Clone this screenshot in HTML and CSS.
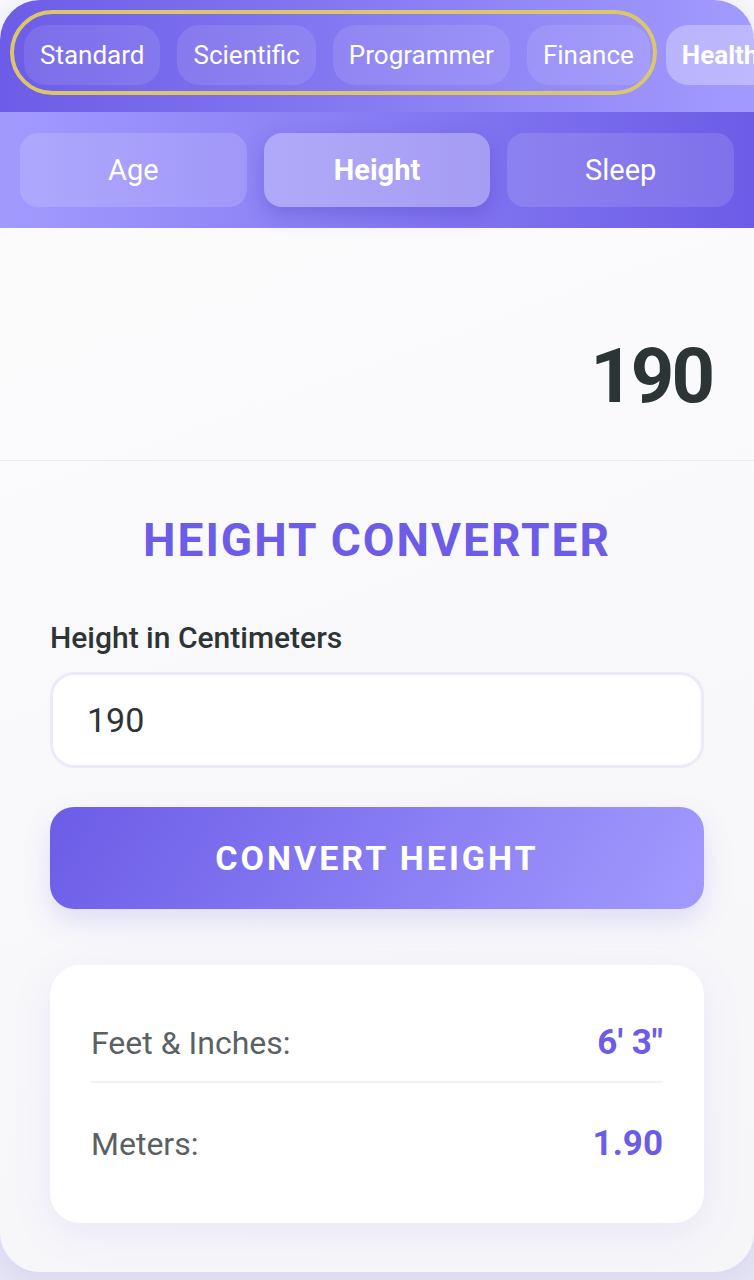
FILE: index.html
```html
<!DOCTYPE html>
<html lang="en">
<head>
    <meta charset="UTF-8">
    <meta name="viewport" content="width=device-width, initial-scale=1.0">
    <title>Height Converter</title>
    <link rel="stylesheet" href="styles.css">
</head>
<body>
    <main class="app">
        <nav class="modes">
            <div class="mode-group">
                <button class="mode">Standard</button>
                <button class="mode">Scientific</button>
                <button class="mode">Programmer</button>
                <button class="mode">Finance</button>
            </div>
            <button class="mode active">Health</button>
        </nav>

        <div class="subtabs">
            <button class="subtab age">Age</button>
            <button class="subtab active">Height</button>
            <button class="subtab sleep">Sleep</button>
        </div>

        <div class="display">190</div>

        <section class="converter">
            <h2 class="title">HEIGHT CONVERTER</h2>
            <label class="label" for="cm">Height in Centimeters</label>
            <input class="input" id="cm" type="text" value="190">
            <button class="convert-btn">CONVERT HEIGHT</button>

            <div class="result">
                <div class="row">
                    <span class="row-name">Feet &amp; Inches:</span>
                    <span class="row-value">6' 3"</span>
                </div>
                <div class="row">
                    <span class="row-name">Meters:</span>
                    <span class="row-value">1.90</span>
                </div>
            </div>
        </section>
    </main>
</body>
</html>
```

FILE: styles.css
```css
* {
    margin: 0;
    padding: 0;
    box-sizing: border-box;
}

body {
    font-family: Roboto, "Noto Sans", sans-serif;
    background: linear-gradient(#f8f8fc, #e6e5f3);
    height: 1280px;
    overflow: hidden;
}

button {
    font-family: inherit;
    border: none;
    color: #fff;
    cursor: pointer;
}

.app {
    height: 1272px;
    border-radius: 40px;
    overflow: hidden;
    background: linear-gradient(160deg, #fcfcfd, #f6f6f9);
    box-shadow: 0 6px 30px rgba(108, 92, 231, 0.12);
}

/* top mode bar */
.modes {
    height: 112px;
    display: flex;
    align-items: flex-start;
    gap: 9px;
    padding: 10px 0 0 10px;
    background: linear-gradient(90deg, #6c5ce7, #a29bfe);
    white-space: nowrap;
    overflow: hidden;
}

.mode-group {
    display: flex;
    gap: 17px;
    padding: 11px 3px 6px 10px;
    border: 4px solid #dcc66c;
    border-radius: 44px;
}

.mode {
    height: 60px;
    padding: 0 16px;
    font-size: 26px;
    border-radius: 22px;
    background: rgba(255, 255, 255, 0.1);
    flex-shrink: 0;
}

.mode.active {
    margin-top: 15px;
    font-weight: 700;
    background: rgba(255, 255, 255, 0.3);
    padding: 0 30px 0 16px;
}

/* sub tabs */
.subtabs {
    height: 116px;
    display: flex;
    gap: 17px;
    padding: 21px 20px;
    background: linear-gradient(90deg, #a29bfe, #6c5ce7);
}

.subtab {
    flex: 1;
    height: 74px;
    font-size: 29px;
    border-radius: 18px;
    background: rgba(255, 255, 255, 0.15);
}

.subtab.sleep {
    background: rgba(255, 255, 255, 0.12);
}

.subtab.active {
    font-weight: 700;
    background: rgba(255, 255, 255, 0.3);
    box-shadow: 0 8px 20px rgba(70, 50, 190, 0.3);
}

/* display */
.display {
    height: 233px;
    padding: 110px 42px 0 0;
    text-align: right;
    font-size: 76px;
    line-height: 76px;
    font-weight: 700;
    letter-spacing: -3px;
    color: #2d3436;
    border-bottom: 1px solid #ececf0;
}

/* converter */
.converter {
    padding: 0 50px;
}

.title {
    margin-top: 49px;
    text-align: center;
    font-size: 46px;
    font-weight: 700;
    letter-spacing: 2px;
    color: #6c5ce7;
    line-height: 60px;
}

.label {
    display: block;
    margin-top: 50px;
    font-size: 30px;
    line-height: 36px;
    font-weight: 500;
    color: #2d3436;
}

.input {
    display: block;
    width: 100%;
    height: 96px;
    margin-top: 16px;
    padding: 0 34px;
    font-family: inherit;
    font-size: 34px;
    color: #2d3436;
    background: #fff;
    border: 3px solid #ece9fb;
    border-radius: 24px;
    outline: none;
}

.convert-btn {
    display: block;
    width: 100%;
    height: 102px;
    margin-top: 39px;
    font-size: 34px;
    font-weight: 700;
    letter-spacing: 3px;
    border-radius: 24px;
    background: linear-gradient(120deg, #6c5ce7, #a29bfe);
    box-shadow: 0 12px 28px rgba(108, 92, 231, 0.18);
}

.result {
    margin-top: 56px;
    padding: 40px 41px 41px;
    background: #fff;
    border-radius: 30px;
    box-shadow: 0 10px 40px rgba(108, 92, 231, 0.1);
}

.row {
    display: flex;
    justify-content: space-between;
    align-items: center;
    padding: 20px 0;
    line-height: 36px;
}

.row + .row {
    margin-top: 23px;
}

.row:first-child {
    border-bottom: 2px solid #f1f0f8;
}

.row-name {
    font-size: 32px;
    color: #5a6164;
}

.row-value {
    font-size: 35px;
    font-weight: 700;
    color: #6c5ce7;
}
```
